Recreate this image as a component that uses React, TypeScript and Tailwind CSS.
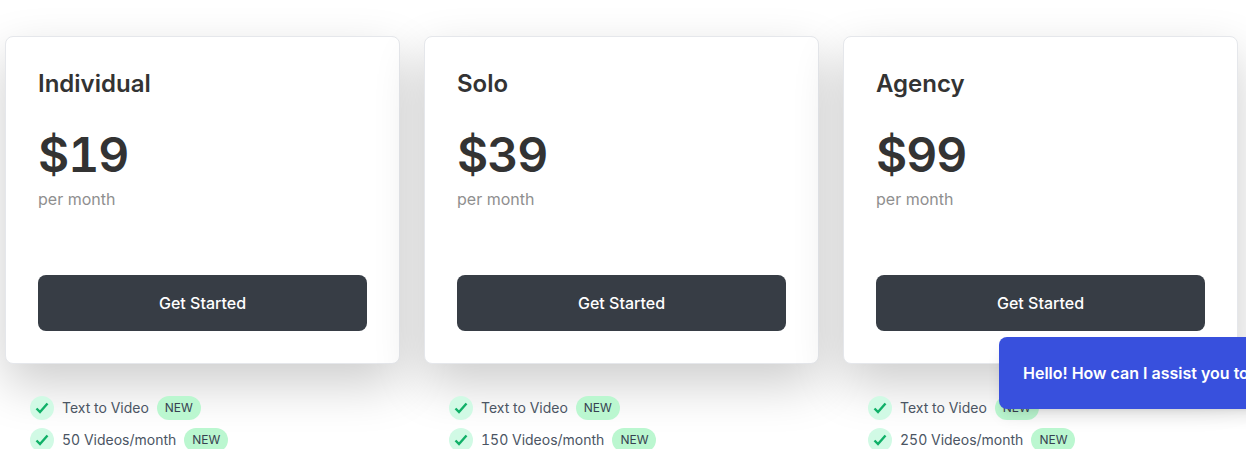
const plans = [
  { name: 'Individual', price: '$19', videos: '50 Videos/month' },
  { name: 'Solo', price: '$39', videos: '150 Videos/month' },
  { name: 'Agency', price: '$99', videos: '250 Videos/month' },
];

function Check() {
  return (
    <span className="flex h-6 w-6 shrink-0 items-center justify-center rounded-full bg-[#d1fae5]">
      <svg width="14" height="14" viewBox="0 0 14 14" fill="none">
        <path d="M1.5 7.5L5 11L12.5 2.5" stroke="#10b068" strokeWidth="2.4" />
      </svg>
    </span>
  );
}

function Feature({ label }: { label: string }) {
  return (
    <li className="flex h-6 items-center">
      <Check />
      <span className="ml-2 text-sm text-[#4b5563] tabular-nums">{label}</span>
      <span className="ml-2 flex h-6 items-center rounded-full bg-[#bbf7d0] px-2 text-xs text-[#374151]">NEW</span>
    </li>
  );
}

export default function App() {
  return (
    <div className="relative h-[449px] w-[1246px] overflow-hidden bg-white font-['Inter',sans-serif]">
      <div className="flex gap-6 pl-[5px] pt-9">
        {plans.map((plan) => (
          <div key={plan.name} className="w-[395px] shrink-0">
            <div className="h-[328px] rounded-lg border border-[#e5e7eb] bg-white p-8 shadow-[0_20px_50px_rgba(0,0,0,0.2)]">
              <h3 className="-mt-px text-2xl leading-8 font-semibold text-[#333]">{plan.name}</h3>
              <p className="mt-[27px] text-5xl leading-[56px] font-semibold tracking-[-1px] text-[#333] tabular-nums">{plan.price}</p>
              <p className="mt-1 text-base leading-6 text-[#8f8f8f]">per month</p>
              <button className="mt-[64px] h-14 w-full rounded-lg bg-[#373d45] text-base font-medium text-white">
                Get Started
              </button>
            </div>
            <ul className="mt-8 flex flex-col gap-2 pl-[25px]">
              <Feature label="Text to Video" />
              <Feature label={plan.videos} />
            </ul>
          </div>
        ))}
      </div>

      <div className="absolute top-[337px] left-[999px] flex h-[72px] w-[400px] items-center rounded-lg bg-[#3850dd] pl-6 text-base font-semibold whitespace-nowrap text-white shadow-lg">
        Hello! How can I assist you today?
      </div>
    </div>
  );
}
